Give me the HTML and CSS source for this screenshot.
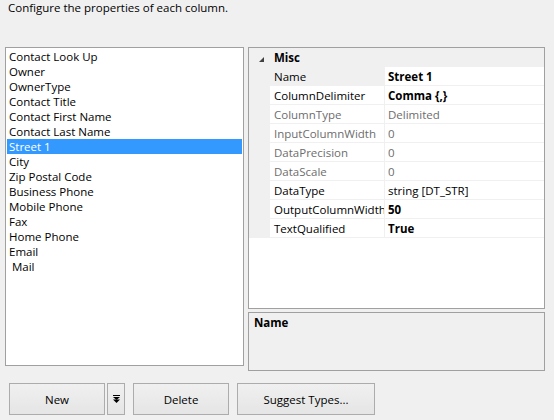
FILE: index.html
```html
<!DOCTYPE html>
<html lang="en">
<head>
    <meta charset="UTF-8">
    <title>Column Properties</title>
    <link rel="stylesheet" href="styles.css">
</head>
<body>
    <div class="dialog">
        <p class="intro">Configure the properties of each column.</p>

        <div class="panes">
            <!-- Column list -->
            <ul class="column-list">
                <li>Contact Look Up</li>
                <li>Owner</li>
                <li>OwnerType</li>
                <li>Contact Title</li>
                <li>Contact First Name</li>
                <li>Contact Last Name</li>
                <li class="selected">Street 1</li>
                <li>City</li>
                <li>Zip Postal Code</li>
                <li>Business Phone</li>
                <li>Mobile Phone</li>
                <li>Fax</li>
                <li>Home Phone</li>
                <li>Email</li>
                <li>&nbsp;Mail</li>
            </ul>

            <div class="props-side">
                <!-- Property grid -->
                <div class="prop-grid">
                    <div class="category">
                        <span class="gutter">
                            <svg width="21" height="19" viewBox="0 0 21 19"><polygon points="15,9 15,14 10,14" fill="#404040"/></svg>
                        </span>
                        <span class="category-name">Misc</span>
                    </div>
                    <div class="prop-row selected">
                        <span class="gutter"></span>
                        <span class="prop-name">Name</span>
                        <span class="prop-value bold">Street 1</span>
                    </div>
                    <div class="prop-row">
                        <span class="gutter"></span>
                        <span class="prop-name">ColumnDelimiter</span>
                        <span class="prop-value bold">Comma {,}</span>
                    </div>
                    <div class="prop-row readonly">
                        <span class="gutter"></span>
                        <span class="prop-name">ColumnType</span>
                        <span class="prop-value">Delimited</span>
                    </div>
                    <div class="prop-row readonly">
                        <span class="gutter"></span>
                        <span class="prop-name">InputColumnWidth</span>
                        <span class="prop-value">0</span>
                    </div>
                    <div class="prop-row readonly">
                        <span class="gutter"></span>
                        <span class="prop-name">DataPrecision</span>
                        <span class="prop-value">0</span>
                    </div>
                    <div class="prop-row readonly">
                        <span class="gutter"></span>
                        <span class="prop-name">DataScale</span>
                        <span class="prop-value">0</span>
                    </div>
                    <div class="prop-row">
                        <span class="gutter"></span>
                        <span class="prop-name">DataType</span>
                        <span class="prop-value">string [DT_STR]</span>
                    </div>
                    <div class="prop-row">
                        <span class="gutter"></span>
                        <span class="prop-name">OutputColumnWidth</span>
                        <span class="prop-value bold">50</span>
                    </div>
                    <div class="prop-row">
                        <span class="gutter"></span>
                        <span class="prop-name">TextQualified</span>
                        <span class="prop-value bold">True</span>
                    </div>
                </div>

                <!-- Description pane -->
                <div class="prop-desc">
                    <span class="desc-title">Name</span>
                </div>
            </div>
        </div>

        <div class="buttons">
            <button class="btn btn-new">New</button>
            <button class="btn btn-drop">
                <svg width="7" height="8" viewBox="0 0 7 8"><rect x="0" y="0" width="7" height="1" fill="#000"/><polygon points="0,2 7,2 3.5,5" fill="#000"/><polygon points="0,4.5 7,4.5 3.5,8" fill="#000"/></svg>
            </button>
            <button class="btn btn-delete">Delete</button>
            <button class="btn btn-suggest">Suggest Types...</button>
        </div>
    </div>
</body>
</html>
```

FILE: styles.css
```css
body {
    margin: 0;
    padding: 0;
    background: #f0f0f0;
    font-family: "Open Sans", "Noto Sans", sans-serif;
    font-size: 11.5px;
    color: #000;
}

.dialog {
    width: 554px;
    height: 420px;
    display: flex;
    flex-direction: column;
}

.intro {
    margin: 0;
    height: 47px;
    padding: 0 0 0 8px;
    line-height: 15px;
    box-sizing: border-box;
}

.panes {
    display: flex;
    align-items: flex-start;
    padding-left: 5px;
    gap: 4px;
}

/* Column list box */
.column-list {
    list-style: none;
    margin: 0;
    padding: 1px;
    width: 239px;
    height: 319px;
    box-sizing: border-box;
    background: #fff;
    border: 1px solid #a0a0a0;
}

.column-list li {
    height: 15px;
    line-height: 15px;
    padding-left: 2px;
    white-space: pre;
}

.column-list li.selected {
    background: #3399ff;
    color: #fff;
}

.props-side {
    display: flex;
    flex-direction: column;
    gap: 3px;
    width: 297px;
}

/* Property grid */
.prop-grid {
    height: 262px;
    box-sizing: border-box;
    border: 1px solid #a0a0a0;
    background: #fff;
}

.gutter {
    width: 21px;
    flex-shrink: 0;
    background: #f0f0f0;
}

.category {
    display: flex;
    height: 19px;
    background: #f0f0f0;
    line-height: 19px;
}

.category .gutter svg {
    display: block;
}

.category-name {
    padding-left: 4px;
    font-weight: bold;
}

.prop-row {
    display: flex;
    height: 19px;
    line-height: 19px;
}

.prop-name {
    width: 115px;
    box-sizing: border-box;
    padding-left: 4px;
    border-right: 1px solid #f0f0f0;
    border-bottom: 1px solid #f0f0f0;
    white-space: nowrap;
    overflow: hidden;
}

.prop-value {
    flex-grow: 1;
    padding-left: 3px;
    border-bottom: 1px solid #f0f0f0;
    white-space: nowrap;
    overflow: hidden;
}

.prop-row.selected .prop-name {
    background: #f0f0f0;
}

.prop-row.readonly {
    color: #6d6d6d;
}

.bold {
    font-weight: bold;
}

/* Description pane */
.prop-desc {
    height: 59px;
    box-sizing: border-box;
    border: 1px solid #a0a0a0;
    padding: 2px 5px;
    line-height: 16px;
}

.desc-title {
    font-weight: bold;
}

/* Bottom buttons */
.buttons {
    display: flex;
    padding: 12px 0 0 9px;
}

.btn {
    height: 32px;
    margin: 0 8px 0 0;
    padding: 0;
    border: 1px solid #acacac;
    background: linear-gradient(#f0f0f0, #e5e5e5);
    font-family: inherit;
    font-size: inherit;
    color: #000;
}

.btn-new {
    width: 96px;
    margin-right: 2px;
}

.btn-drop {
    width: 18px;
    display: flex;
    align-items: center;
    justify-content: center;
}

.btn-delete {
    width: 96px;
}

.btn-suggest {
    width: 138px;
}
```
